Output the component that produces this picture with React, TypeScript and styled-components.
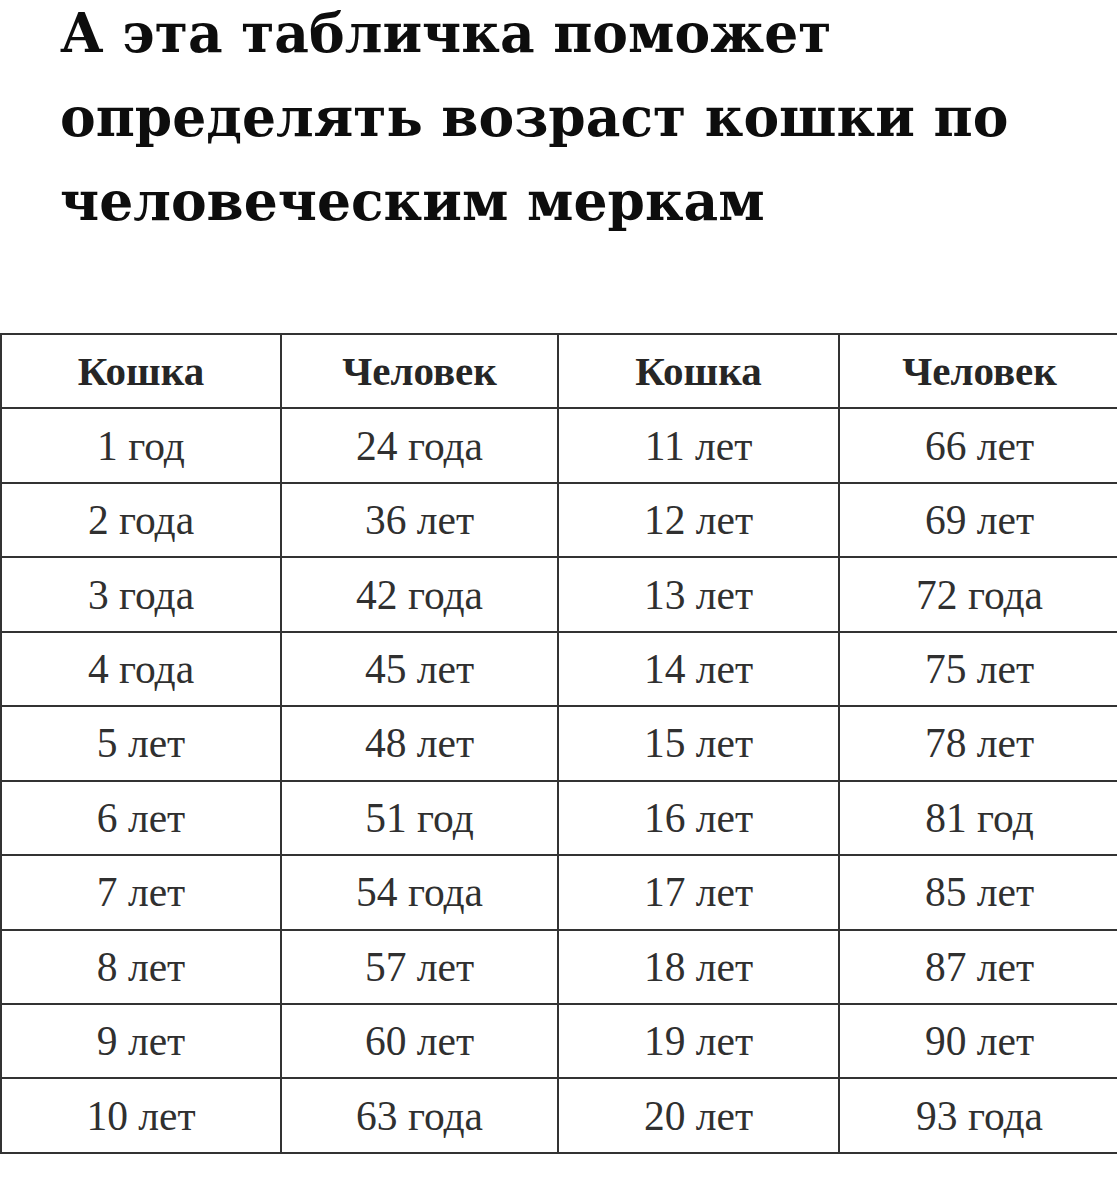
import React from "react";
import styled, { createGlobalStyle } from "styled-components";

const Global = createGlobalStyle`
  html, body { margin: 0; padding: 0; background: #ffffff; }
  body { overflow-x: hidden; width: 1117px; }
`;

const Page = styled.div`
  width: 1117px;
  height: 1200px;
  background: #fff;
  overflow: hidden;
`;

const Title = styled.h1`
  margin: -8px 0 0 0;
  padding: 0 0 0 60px;
  font-family: "DejaVu Serif", "Liberation Serif", serif;
  font-weight: 700;
  font-size: 53.5px;
  line-height: 84px;
  color: #0d0d0d;
  width: 1057px;
  white-space: nowrap;
`;

const TableWrap = styled.div`
  margin-top: 89px;
  width: 1120px;
`;

const Table = styled.table`
  border-collapse: collapse;
  table-layout: fixed;
  width: 1119px;
  font-family: "Liberation Serif", "Times New Roman", serif;
  color: #2b2b2b;
`;

const Cell = styled.td<{ $head?: boolean }>`
  border: 2px solid #333;
  height: 72.45px;
  padding: 0;
  text-align: center;
  vertical-align: middle;
  font-size: ${(p) => (p.$head ? "41px" : "41.5px")};
  font-weight: ${(p) => (p.$head ? 700 : 400)};
  color: ${(p) => (p.$head ? "#262626" : "#303030")};
`;

const rows: [string, string, string, string][] = [
  ["1 год", "24 года", "11 лет", "66 лет"],
  ["2 года", "36 лет", "12 лет", "69 лет"],
  ["3 года", "42 года", "13 лет", "72 года"],
  ["4 года", "45 лет", "14 лет", "75 лет"],
  ["5 лет", "48 лет", "15 лет", "78 лет"],
  ["6 лет", "51 год", "16 лет", "81 год"],
  ["7 лет", "54 года", "17 лет", "85 лет"],
  ["8 лет", "57 лет", "18 лет", "87 лет"],
  ["9 лет", "60 лет", "19 лет", "90 лет"],
  ["10 лет", "63 года", "20 лет", "93 года"],
];

export default function App() {
  return (
    <Page>
      <Global />
      <Title>
        А эта табличка поможет
        <br />
        определять возраст кошки по
        <br />
        человеческим меркам
      </Title>
      <TableWrap>
        <Table>
          <colgroup>
            <col style={{ width: 280 }} />
            <col style={{ width: 277 }} />
            <col style={{ width: 281 }} />
            <col style={{ width: 281 }} />
          </colgroup>
          <tbody>
            <tr>
              <Cell $head>Кошка</Cell>
              <Cell $head>Человек</Cell>
              <Cell $head>Кошка</Cell>
              <Cell $head>Человек</Cell>
            </tr>
            {rows.map((r, i) => (
              <tr key={i}>
                {r.map((c, j) => (
                  <Cell key={j}>{c}</Cell>
                ))}
              </tr>
            ))}
          </tbody>
        </Table>
      </TableWrap>
    </Page>
  );
}
